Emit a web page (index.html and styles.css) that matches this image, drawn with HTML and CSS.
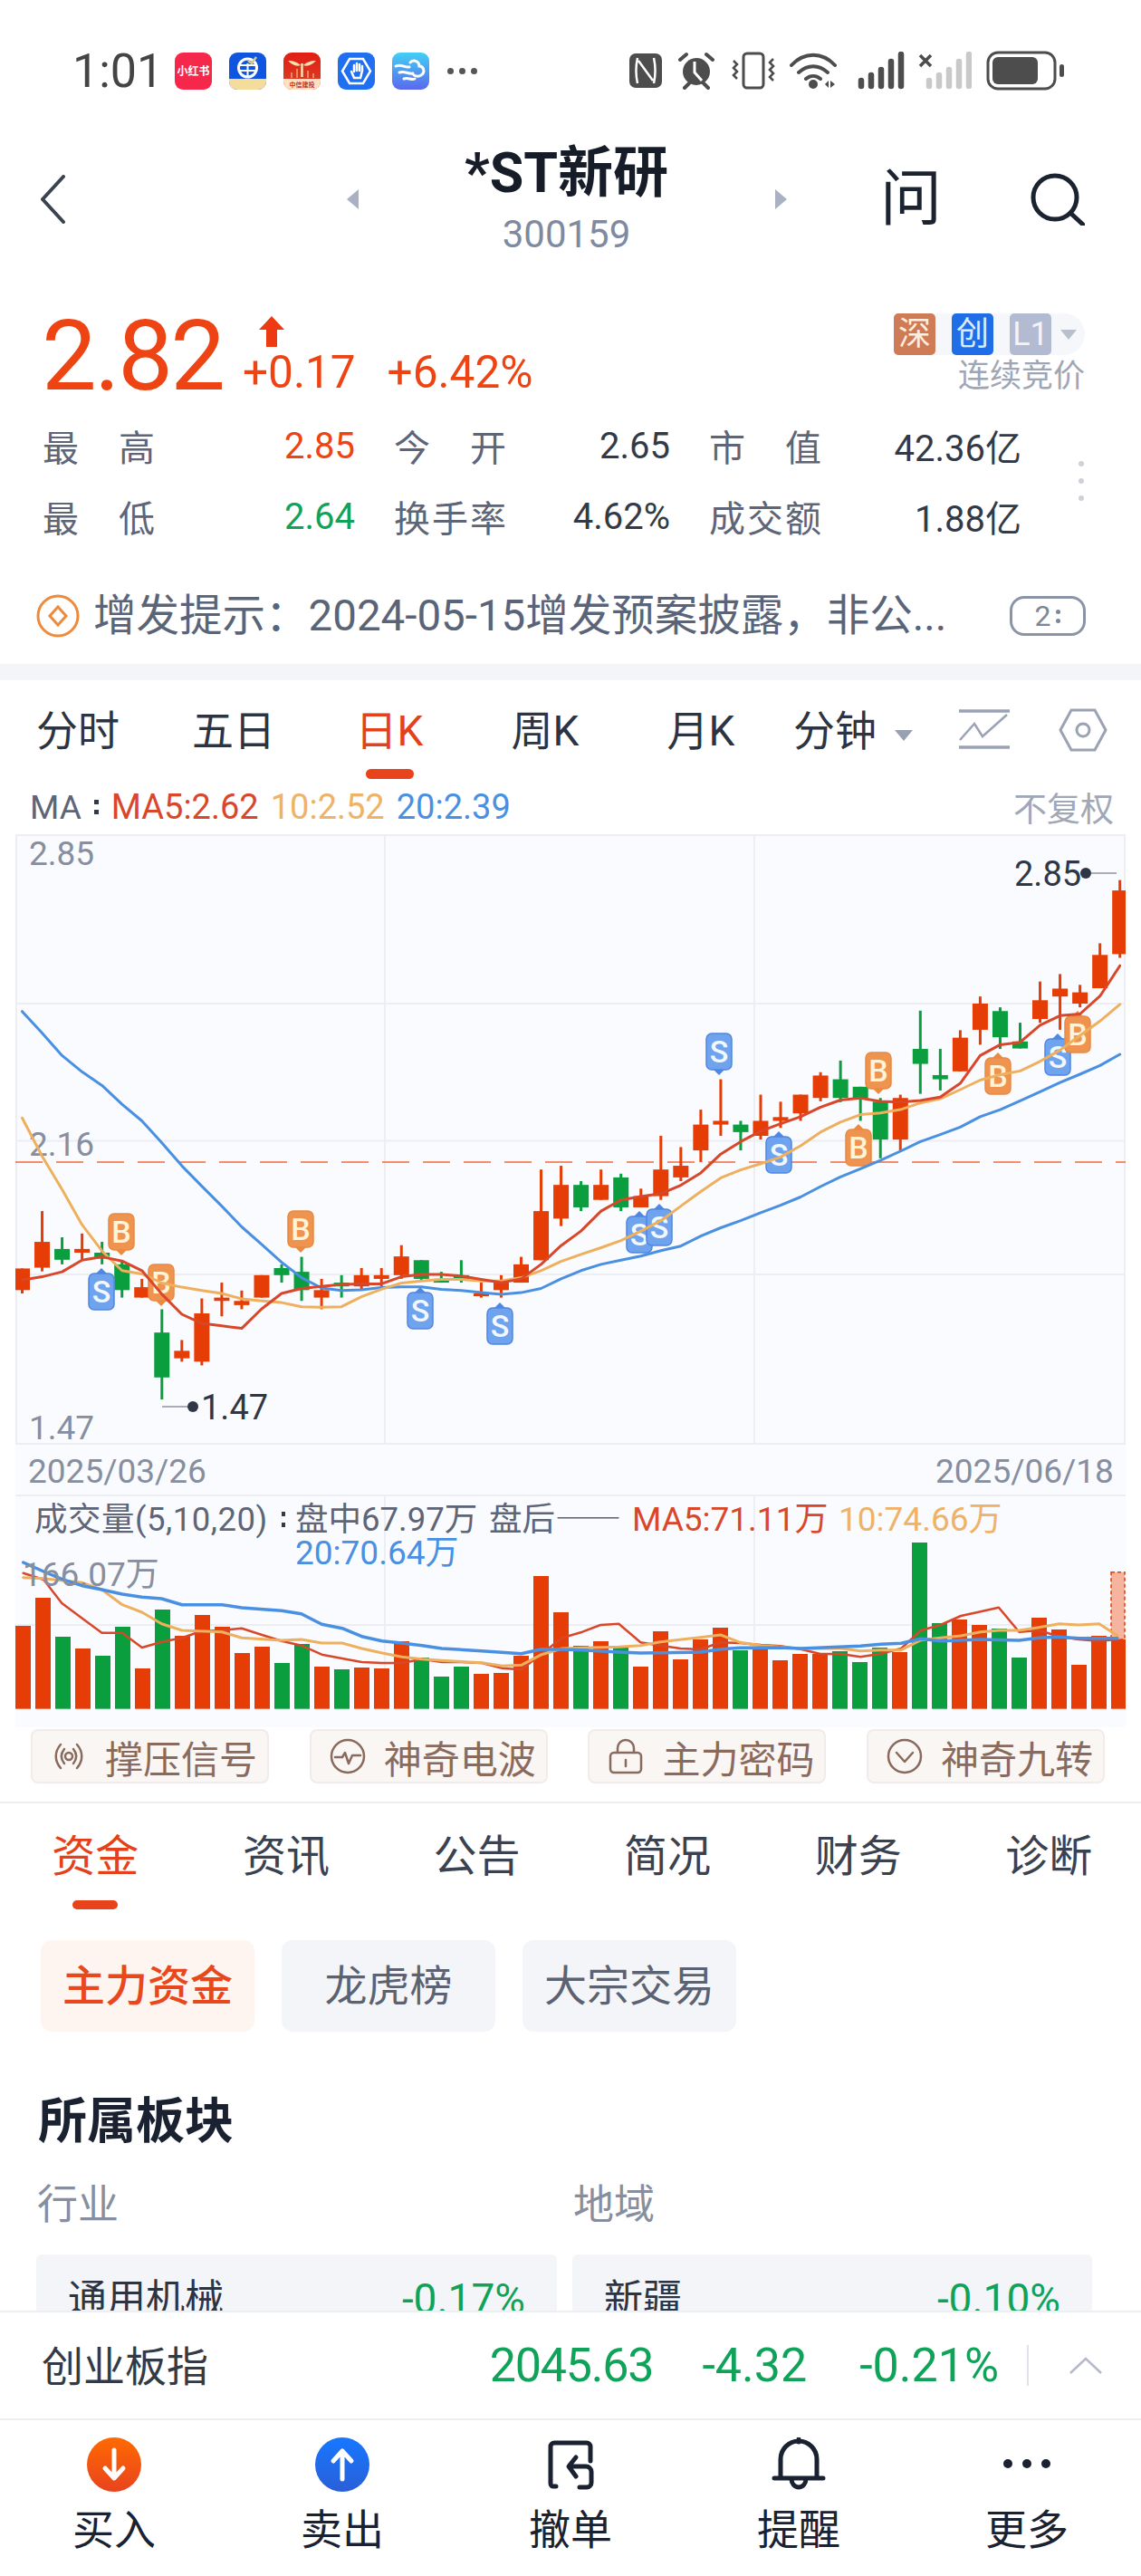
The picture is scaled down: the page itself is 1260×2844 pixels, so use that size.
FILE: index.html
```html
<!DOCTYPE html>
<html lang="zh-CN">

<head>
  <meta charset="UTF-8">
  <meta name="viewport" content="width=device-width, initial-scale=1.0">
  <title>*ST新研 300159</title>
  <link rel="stylesheet" href="styles.css">
</head>

<body>
  <main class="page-main">
    <div class="status">
      <span class="status-time">1:01</span>
      <div class="status-apps">
        <svg class="app-icon" viewBox="0 0 41 41"><rect width="41" height="41" rx="9" fill="#f5274a"/><text x="20.5" y="25" class="app-text">小红书</text></svg>
        <svg class="app-icon" viewBox="0 0 41 41"><rect width="41" height="41" rx="9" fill="#0f55e0"/><path d="M0 29h41v3a9 9 0 0 1-9 9H9a9 9 0 0 1-9-9z" fill="#f4dc9c"/><circle cx="20.5" cy="17" r="10" fill="none" stroke="#fff" stroke-width="3"/><path d="M11 14h19M11 20h19M20.500 12v14" stroke="#fff" stroke-width="2"/><path d="M21 9l4 3 5-7" fill="none" stroke="#d8c98a" stroke-width="2.500"/></svg>
        <svg class="app-icon" viewBox="0 0 41 41"><defs><linearGradient id="citicBg" x1="0" y1="0" x2="0" y2="1"><stop offset="0" stop-color="#e21d12"/><stop offset="1" stop-color="#d8432a"/></linearGradient></defs><rect width="41" height="41" rx="9" fill="url(#citicBg)"/><path d="M0 29h41v3a9 9 0 0 1-9 9H9a9 9 0 0 1-9-9z" fill="#fbe2c4"/><path d="M5 9c6 0 11 2 14 5-5 2-10-1-14-5zM36 9c-6 0-11 2-14 5 5 2 10-1 14-5z" fill="#fbe0b0"/><path d="M20.500 12v15" stroke="#fbe0b0" stroke-width="2.500"/><path d="M9 22v6M15 18v10M27 20v8M33 23v5" stroke="#f08a5c" stroke-width="2"/><text x="20.500" y="38" class="app-text-tiny">中信建投</text></svg>
        <svg class="app-icon" viewBox="0 0 41 41"><rect width="41" height="41" rx="9" fill="#1f6ff0"/><path d="M13 7h15l8 13.500-8 13.500H13L5 20.500z" fill="none" stroke="#fff" stroke-width="2.500"/><path d="M15 21l3 7h7l2-8v-5M18 21v-7M21 20v-8M24 20v-7" fill="none" stroke="#fff" stroke-width="2.500" stroke-linecap="round"/></svg>
        <svg class="app-icon" viewBox="0 0 41 41"><defs><linearGradient id="cloudBg" x1="0" y1="0" x2="0" y2="1"><stop offset="0" stop-color="#42d0f5"/><stop offset="1" stop-color="#5b68ee"/></linearGradient></defs><rect width="41" height="41" rx="9" fill="url(#cloudBg)"/><path d="M4 15c6-3 10 2 15 1M8 22c6-2 9 2 15 1M20 11c4-4 10-1 10 4 5 0 7 7 2 10-3 2-6 1-8 0M13 29c5-2 8 2 12 0" fill="none" stroke="#fff" stroke-width="3" stroke-linecap="round"/></svg>
      </div>
      <span class="status-more"><i></i><i></i><i></i></span>
      <div class="status-right">
        <svg class="st-nfc" viewBox="0 0 36 38"><rect width="36" height="38" rx="7" fill="#4d4d4d"/><path d="M9 5c-2 9-2 19 0 28M27 5c2 9 2 19 0 28M10 8l16 22" fill="none" stroke="#fff" stroke-width="2.500"/></svg>
        <svg class="st-alarm" viewBox="0 0 40 42"><circle cx="20" cy="22" r="15" fill="#4d4d4d"/><path d="M18 11v12l8 9" fill="none" stroke="#fff" stroke-width="3"/><path d="M2 9l7-6M38 9l-7-6M7 40l5-5M33 40l-5-5" stroke="#4d4d4d" stroke-width="4" stroke-linecap="round"/></svg>
        <svg class="st-vibrate" viewBox="0 0 48 42"><rect x="13" y="2" width="22" height="38" rx="4" fill="none" stroke="#4d4d4d" stroke-width="3"/><path d="M2 10l4 4-4 4 4 4-4 4 4 4M46 8l-4 4 4 4-4 4 4 4-4 4 4 4" fill="none" stroke="#4d4d4d" stroke-width="2.500"/></svg>
        <svg class="st-wifi" viewBox="0 0 52 42"><path d="M2 15c14-15 34-15 48 0M10 23c10-9 22-9 32 0M18 30c5-4 11-4 16 0" fill="none" stroke="#4d4d4d" stroke-width="4" stroke-linecap="round"/><circle cx="26" cy="36" r="5" fill="#4d4d4d"/><path d="M39 36l4-4v8zM45 32l5 4-5 4z" fill="#4d4d4d"/></svg>
        <svg class="st-signal" viewBox="0 0 52 42"><path d="M4 38v-6M15 38V26M26 38V20M37 38V11M48 38V3" stroke="#4d4d4d" stroke-width="6.500" stroke-linecap="round"/></svg>
        <svg class="st-signal2" viewBox="0 0 59 42"><path d="M2 4l12 12M14 4L2 16" stroke="#4d4d4d" stroke-width="3.500"/><path d="M12 38v-6M23 38V26M34 38V20M45 38V11M56 38V3" stroke="#c9c9c9" stroke-width="6.500" stroke-linecap="round"/></svg>
        <svg class="st-battery" viewBox="0 0 86 44"><rect x="2" y="2" width="74" height="40" rx="11" fill="none" stroke="#4d4d4d" stroke-width="3"/><rect x="7" y="7" width="50" height="30" rx="6" fill="#4d4d4d"/><rect x="81" y="15" width="5" height="14" rx="2.500" fill="#4d4d4d"/></svg>
      </div>
    </div>

    <header class="nav">
      <svg class="nav-back" viewBox="0 0 28 54"><path d="M26 2L3 27l23 25" fill="none" stroke="#3b4250" stroke-width="4" stroke-linecap="round" stroke-linejoin="round"/></svg>
      <div class="nav-center">
        <span class="nav-tri nav-tri-left"></span>
        <div class="nav-title">
          <div class="nav-name">*ST新研</div>
          <div class="nav-code">300159</div>
        </div>
        <span class="nav-tri nav-tri-right"></span>
      </div>
      <div class="nav-right">
        <span class="nav-ask">问</span>
        <svg class="nav-search" viewBox="0 0 62 58"><circle cx="29" cy="27" r="24" fill="none" stroke="#1c2330" stroke-width="5"/><path d="M46 44l14 13" stroke="#1c2330" stroke-width="5" stroke-linecap="round"/></svg>
      </div>
    </header>

    <section class="quote">
      <div class="price-row">
        <div class="price">2.82</div>
        <div class="change-col">
          <svg class="change-arrow" viewBox="0 0 30 34"><path d="M15 0l14 15h-8v19H9V15H1z" fill="#ee3a12"/></svg>
          <div class="change-vals"><span>+0.17</span><span>+6.42%</span></div>
        </div>
        <div class="tag-col">
          <div class="tag-pill">
            <span class="tag tag-sz">深</span>
            <span class="tag tag-cy">创</span>
            <span class="tag tag-l1">L1</span>
            <span class="tag-tri"></span>
          </div>
          <div class="tag-note">连续竞价</div>
        </div>
      </div>
      <div class="stats-wrap">
        <div class="stats">
          <div class="stat"><span class="stat-label">最高</span><span class="up">2.85</span></div>
          <div class="stat"><span class="stat-label">今开</span><span>2.65</span></div>
          <div class="stat"><span class="stat-label">市值</span><span>42.36亿</span></div>
          <div class="stat"><span class="stat-label">最低</span><span class="down">2.64</span></div>
          <div class="stat"><span class="stat-label">换手率</span><span>4.62%</span></div>
          <div class="stat"><span class="stat-label">成交额</span><span>1.88亿</span></div>
        </div>
        <span class="stats-more"><i></i><i></i><i></i></span>
      </div>
    </section>

    <div class="notice">
      <svg class="notice-icon" viewBox="0 0 48 48"><circle cx="24" cy="24" r="22" fill="none" stroke="#ee8a3c" stroke-width="3"/><path d="M24 14l9 10-9 10-9-10z" fill="none" stroke="#ee8a3c" stroke-width="3"/></svg>
      <span class="notice-text">增发提示：2024-05-15增发预案披露，非公...</span>
      <span class="notice-pill">2<span class="pill-dots"><i></i><i></i></span></span>
    </div>

    <div class="band"></div>

    <nav class="ktabs">
      <div class="ktab">分时</div>
      <div class="ktab">五日</div>
      <div class="ktab ktab-active">日K</div>
      <div class="ktab">周K</div>
      <div class="ktab">月K</div>
      <div class="ktab ktab-min">分钟<span class="ktab-tri"></span></div>
      <svg class="ktab-line" viewBox="0 0 58 44"><path d="M1 2h56M1 42h56" stroke="#9aa2b4" stroke-width="3.500"/><path d="M2 34l16-18 9 14L54 6" fill="none" stroke="#9aa2b4" stroke-width="2.500"/></svg>
      <svg class="ktab-hex" viewBox="0 0 54 48"><path d="M14 2h26l12 22-12 22H14L2 24z" fill="none" stroke="#9aa2b4" stroke-width="3"/><circle cx="27" cy="24" r="7" fill="none" stroke="#9aa2b4" stroke-width="3"/></svg>
    </nav>

    <div class="ma-row">
      <span class="ma-name">MA</span><span class="ma-dots"><i></i><i></i></span>
      <span class="ma5">MA5:2.62</span>
      <span class="ma10">10:2.52</span>
      <span class="ma20">20:2.39</span>
      <span class="ma-adjust">不复权</span>
    </div>

    <div class="chart-panel">
      <svg class="chart-svg" viewBox="17 921 1226 986" width="1226" height="986">
        <g class="grid-lines">
          <path d="M17 922H1243M17 1108H1243M17 1259.500H1243M17 1407H1243M17 1594H1243M425 922V1594M833 922V1594M18 922V1594M1242 922V1594"/>
          <path d="M17 1651H1243M17 1794H1243M425 1651V1887M833 1651V1887"/>
        </g>
        <text x="32" y="955" class="axis-text">2.85</text>
        <text x="32" y="1276" class="axis-text">2.16</text>
        <text x="32" y="1589" class="axis-text">1.47</text>
        <path class="prev-close" d="M17 1283H1243"/>
        <g id="candles"></g>
        <g id="markers"></g>
        <g id="maLines"></g>
        <path class="peak-line" d="M179 1553H208M1205 964H1233"/>
        <circle cx="213" cy="1553" r="6" class="peak-dot"/>
        <circle cx="1199" cy="964" r="6" class="peak-dot"/>
        <text x="222" y="1567" class="peak-text">1.47</text>
        <text x="1120" y="978" class="peak-text">2.85</text>
        <text x="31" y="1637" class="date-text">2025/03/26</text>
        <text x="1033" y="1637" class="date-text">2025/06/18</text>
        <g id="volBars"></g>
        <g id="volLines"></g>
        <text x="25" y="1751" class="vol-text vol-gray">166.07万</text>
        <text x="38" y="1690" class="vol-text vol-dark vol-head">成交量(5,10,20)</text>
        <rect x="311" y="1669" width="4" height="5" class="vol-dot"/>
        <rect x="311" y="1681" width="4" height="5" class="vol-dot"/>
        <text x="326" y="1690" class="vol-text vol-dark">盘中67.97万</text>
        <text x="540" y="1690" class="vol-text vol-dark vol-cjk">盘后——</text>
        <text x="698" y="1690" class="vol-text vol-red">MA5:71.11万</text>
        <text x="926" y="1690" class="vol-text vol-orange">10:74.66万</text>
        <text x="326" y="1727" class="vol-text vol-blue">20:70.64万</text>
      </svg>
    </div>

    <div class="signals">
      <div class="signal">
        <svg viewBox="0 0 40 40"><circle cx="20" cy="20" r="4" fill="none"/><path d="M11 7c-7 8-7 18 0 26M29 7c7 8 7 18 0 26M15 12c-4 5-4 11 0 16M25 12c4 5 4 11 0 16"/></svg>
        撑压信号
      </div>
      <div class="signal">
        <svg viewBox="0 0 40 40"><circle cx="20" cy="20" r="18"/><path d="M6 21h8l3-5 4 12 4-9h9"/></svg>
        神奇电波
      </div>
      <div class="signal">
        <svg viewBox="0 0 40 40"><rect x="3" y="16" width="34" height="22" rx="4"/><path d="M11 16v-5a9 9 0 0 1 18 0v5M20 24v7"/></svg>
        主力密码
      </div>
      <div class="signal">
        <svg viewBox="0 0 40 40"><circle cx="20" cy="20" r="18"/><path d="M11 16l9 10 9-10"/></svg>
        神奇九转
      </div>
    </div>

    <nav class="dtabs">
      <div class="dtab dtab-active">资金</div>
      <div class="dtab">资讯</div>
      <div class="dtab">公告</div>
      <div class="dtab">简况</div>
      <div class="dtab">财务</div>
      <div class="dtab">诊断</div>
    </nav>

    <div class="chips">
      <div class="chip chip-active">主力资金</div>
      <div class="chip">龙虎榜</div>
      <div class="chip">大宗交易</div>
    </div>

    <h2 class="block-title">所属板块</h2>
    <div class="block-grid">
      <div class="block-col">
        <div class="block-label">行业</div>
        <div class="block-card"><span>通用机械</span><span class="block-pct">-0.17%</span></div>
      </div>
      <div class="block-col">
        <div class="block-label">地域</div>
        <div class="block-card"><span>新疆</span><span class="block-pct">-0.10%</span></div>
      </div>
    </div>
  </main>

  <div class="index-bar">
    <span class="index-name">创业板指</span>
    <div class="index-nums"><span class="index-last">2045.63</span><span class="index-diff">-4.32</span><span>-0.21%</span></div>
    <span class="index-sep"></span>
    <svg class="index-chevron" viewBox="0 0 38 20"><path d="M2 18L19 2l17 16" fill="none" stroke="#b4bac8" stroke-width="2.500"/></svg>
  </div>

  <nav class="bottom-nav">
    <div class="bnav-item">
      <svg class="bnav-icon" viewBox="0 0 60 60"><defs><linearGradient id="buyBg" x1="0" y1="0" x2="0" y2="1"><stop offset="0" stop-color="#ff6a00"/><stop offset="1" stop-color="#e8431f"/></linearGradient></defs><circle cx="30" cy="30" r="30" fill="url(#buyBg)"/><path d="M30 14v31M20 34l10 11 10-11" fill="none" stroke="#fff" stroke-width="5" stroke-linecap="round" stroke-linejoin="round"/></svg>
      买入
    </div>
    <div class="bnav-item">
      <svg class="bnav-icon" viewBox="0 0 60 60"><defs><linearGradient id="sellBg" x1="0" y1="0" x2="0" y2="1"><stop offset="0" stop-color="#1677ff"/><stop offset="1" stop-color="#2a5fd8"/></linearGradient></defs><circle cx="30" cy="30" r="30" fill="url(#sellBg)"/><path d="M30 46V15M20 26l10-11 10 11" fill="none" stroke="#fff" stroke-width="5" stroke-linecap="round" stroke-linejoin="round"/></svg>
      卖出
    </div>
    <div class="bnav-item">
      <svg class="bnav-icon" viewBox="0 0 60 60"><path d="M14 54h-3a3 3 0 0 1-3-3V10a4 4 0 0 1 4-4h36a4 4 0 0 1 4 4v16M40 55h8a5 5 0 0 0 5-5V38a6 6 0 0 0-6-6H29M36 22l-8 10 8 11" fill="none" stroke="#1a2130" stroke-width="5" stroke-linecap="round" stroke-linejoin="round"/></svg>
      撤单
    </div>
    <div class="bnav-item">
      <svg class="bnav-icon" viewBox="0 0 60 60"><path d="M10 44V24a20 20 0 0 1 40 0v20M3 45h54M30 2v3M22 46a8 9 0 0 0 16 0" fill="none" stroke="#1a2130" stroke-width="5" stroke-linecap="round"/></svg>
      提醒
    </div>
    <div class="bnav-item">
      <svg class="bnav-icon" viewBox="0 0 60 60"><circle cx="9" cy="29" r="5" fill="#1a2130"/><circle cx="30" cy="29" r="5" fill="#1a2130"/><circle cx="51" cy="29" r="5" fill="#1a2130"/></svg>
      更多
    </div>
  </nav>

  <script src="chart.js"></script>
</body>

</html>
```

FILE: styles.css
```css
*,
*::before,
*::after {
  margin: 0;
  padding: 0;
  box-sizing: border-box;
}
body {
  width: 1260px;
  height: 2844px;
  display: flex;
  flex-direction: column;
  overflow: hidden;
  background: #fff;
  font-family: Roboto, "Noto Sans CJK SC", sans-serif;
  color: #333a47;
}
i {
  display: block;
}
.up {
  color: #ee4312;
}
.down {
  color: #0fa35a;
}
.page-main {
  flex: 1;
  min-height: 0;
  overflow: hidden;
}

/* status bar */
.status {
  display: flex;
  align-items: center;
  height: 156px;
  padding: 0 85px 0 80px;
}
.status-time {
  width: 113px;
  font-size: 52px;
  color: #444;
}
.status-apps {
  display: flex;
  gap: 19px;
}
.app-icon {
  width: 41px;
  height: 41px;
}
.app-text {
  font-size: 12px;
  font-weight: 700;
  fill: #fff;
  text-anchor: middle;
}
.app-text-tiny {
  font-size: 7px;
  font-weight: 700;
  fill: #c8321c;
  text-anchor: middle;
}
.status-more {
  display: flex;
  gap: 6px;
  margin-left: 20px;
}
.status-more i {
  width: 7px;
  height: 7px;
  border-radius: 50%;
  background: #555;
}
.status-right {
  display: flex;
  align-items: center;
  margin-left: auto;
}
.st-nfc {
  width: 36px;
  height: 38px;
}
.st-alarm {
  width: 40px;
  height: 42px;
  margin-left: 18px;
}
.st-vibrate {
  width: 48px;
  height: 42px;
  margin-left: 19px;
}
.st-wifi {
  width: 52px;
  height: 42px;
  margin-left: 16px;
}
.st-signal {
  width: 52px;
  height: 42px;
  margin-left: 23px;
}
.st-signal2 {
  width: 59px;
  height: 42px;
  margin-left: 15px;
}
.st-battery {
  width: 86px;
  height: 44px;
  margin-left: 16px;
}

/* nav */
.nav {
  display: grid;
  grid-template-columns: 1fr auto 1fr;
  align-items: center;
  height: 126px;
  padding: 0 62px 0 44px;
}
.nav-back {
  width: 28px;
  height: 54px;
}
.nav-center {
  display: flex;
  align-items: center;
  justify-content: space-between;
  width: 486px;
  margin-left: 9px;
}
.nav-tri {
  width: 0;
  height: 0;
  border-top: 11px solid transparent;
  border-bottom: 11px solid transparent;
}
.nav-tri-left {
  border-right: 13px solid #a9b1c3;
}
.nav-tri-right {
  border-left: 13px solid #a9b1c3;
}
.nav-title {
  padding-top: 4px;
  text-align: center;
}
.nav-name {
  font-size: 61px;
  line-height: 62px;
  font-weight: 700;
  color: #161c28;
}
.nav-code {
  margin-top: 13px;
  font-size: 42px;
  line-height: 48px;
  color: #7f8aa0;
}
.nav-right {
  display: flex;
  align-items: center;
  justify-content: flex-end;
  gap: 96px;
}
.nav-ask {
  font-size: 68px;
  line-height: 68px;
  color: #1c2330;
}
.nav-search {
  width: 62px;
  height: 58px;
}

/* quote */
.quote {
  padding: 57px 62px 0 46px;
}
.price-row {
  display: flex;
  align-items: flex-start;
}
.price {
  width: 198px;
  font-size: 108px;
  line-height: 108px;
  letter-spacing: -2.500px;
  color: #ee4312;
}
.change-col {
  margin: 10px 0 0 24px;
}
.change-arrow {
  display: block;
  width: 30px;
  height: 34px;
  margin-left: 17px;
}
.change-vals {
  display: flex;
  gap: 35px;
  margin-top: 2px;
  font-size: 49.5px;
  line-height: 52px;
  color: #ee4312;
}
.tag-col {
  margin: 7px 0 0 auto;
}
.tag-pill {
  display: flex;
  align-items: center;
  gap: 18px;
  width: 211px;
  height: 46px;
  border-radius: 23px 23px 23px 8px;
  background: #f6f7fb;
}
.tag {
  width: 46px;
  height: 46px;
  border-radius: 5px;
  font-size: 36px;
  line-height: 46px;
  text-align: center;
  color: #fff;
}
.tag-sz {
  background: #cf7b55;
  color: #ffeedd;
}
.tag-cy {
  background: #1f6ee8;
  color: #d8ecff;
}
.tag-l1 {
  background: #b3bbd3;
  color: #f2f4fa;
}
.tag-tri {
  width: 0;
  height: 0;
  margin-left: -8px;
  border-left: 9px solid transparent;
  border-right: 9px solid transparent;
  border-top: 11px solid #b9bfcc;
}
.tag-note {
  margin-top: 2px;
  padding-left: 71px;
  font-size: 35px;
  line-height: 44px;
  white-space: nowrap;
  color: #9ea6b6;
}
.stats-wrap {
  display: flex;
  align-items: center;
  margin: 6px 0 0 1px;
}
.stats {
  display: grid;
  grid-template-columns: 345px 305px 345px;
  column-gap: 43px;
  grid-auto-rows: 78px;
  flex-shrink: 0;
  font-size: 40px;
}
.stat {
  display: flex;
  align-items: center;
  justify-content: space-between;
  white-space: nowrap;
}
.stat-label {
  width: 124px;
  text-align-last: justify;
  color: #5d6576;
}
.stats-more {
  display: flex;
  flex-direction: column;
  gap: 13px;
  margin-left: 63px;
}
.stats-more i {
  width: 6px;
  height: 6px;
  border-radius: 50%;
  background: #cdd1da;
}

/* notice */
.notice {
  display: flex;
  align-items: center;
  padding: 47px 61px 29px 40px;
}
.notice-icon {
  width: 48px;
  height: 48px;
  flex-shrink: 0;
}
.notice-text {
  margin-left: 15px;
  font-size: 47.5px;
  line-height: 48px;
  white-space: nowrap;
  color: #5a6478;
}
.notice-pill {
  display: flex;
  align-items: center;
  justify-content: center;
  gap: 6px;
  width: 84px;
  height: 44px;
  margin-left: auto;
  border: 3px solid #8b93a6;
  border-radius: 16px;
  font-size: 32px;
  line-height: 38px;
  color: #7d8699;
}
.pill-dots i {
  width: 5px;
  height: 5px;
  margin: 5px 0;
  border-radius: 50%;
  background: #7d8699;
}
.band {
  height: 18px;
  background: #f4f5f9;
}

/* kline tabs */
.ktabs {
  display: flex;
  height: 110px;
}
.ktab {
  width: 172px;
  padding-top: 31px;
  font-size: 46px;
  line-height: 50px;
  text-align: center;
  color: #2c3342;
}
.ktab-active {
  color: #e4411a;
}
.ktab-active::after {
  content: "";
  display: block;
  width: 53px;
  height: 11px;
  margin: 17px auto 0;
  border-radius: 6px;
  background: #e8431a;
}
.ktab-min {
  display: flex;
  align-items: flex-start;
  width: auto;
  margin-left: 16px;
}
.ktab-tri {
  width: 0;
  height: 0;
  margin: 24px 0 0 20px;
  border-left: 10px solid transparent;
  border-right: 10px solid transparent;
  border-top: 12px solid #98a0b2;
}
.ktab-line {
  width: 58px;
  height: 44px;
  margin: 32px 0 0 50px;
}
.ktab-hex {
  width: 54px;
  height: 48px;
  margin: 31px 0 0 53px;
}

/* ma legend */
.ma-row {
  display: flex;
  align-items: center;
  height: 60px;
  padding: 0 30px 0 33px;
  font-size: 38px;
  white-space: nowrap;
}
.ma-name {
  font-size: 37px;
  color: #5d6576;
}
.ma-dots {
  margin: 0 14px 0 14px;
}
.ma-dots i {
  width: 5px;
  height: 5px;
  margin: 6px 0;
  background: #333a47;
}
.ma5 {
  color: #d9472b;
}
.ma10 {
  margin-left: 13px;
  color: #eeb268;
}
.ma20 {
  margin-left: 13px;
  color: #4a90e2;
}
.ma-adjust {
  margin-left: auto;
  font-size: 37px;
  color: #a0a7b6;
}

/* chart */
.chart-panel {
  width: 1226px;
  height: 986px;
  margin-left: 17px;
  background: #fafbfe;
}
.chart-svg {
  display: block;
}
.grid-lines path {
  fill: none;
  stroke: #eceef3;
  stroke-width: 2;
}
.axis-text {
  font-size: 37px;
  fill: #868ea0;
}
.date-text {
  font-size: 37px;
  fill: #868ea0;
}
.prev-close {
  fill: none;
  stroke: #ef6b3a;
  stroke-width: 1.500;
  stroke-dasharray: 30 15;
}
.peak-line {
  fill: none;
  stroke: #8d94a3;
  stroke-width: 1.500;
}
.peak-dot {
  fill: #2f3747;
}
.peak-text {
  font-size: 38px;
  fill: #2f3747;
}
.vol-text {
  font-size: 37px;
}
.vol-head {
  font-size: 36.500px;
  letter-spacing: 0.500px;
}
.vol-cjk {
  font-family: "Noto Sans CJK SC", sans-serif;
  font-size: 36.500px;
}
.vol-gray {
  fill: #868ea0;
}
.vol-dark {
  font-size: 36.500px;
  fill: #5d6576;
}
.vol-red {
  fill: #d9472b;
}
.vol-orange {
  fill: #eeb268;
}
.vol-blue {
  fill: #4a90e2;
}
.vol-dot {
  fill: #333a47;
}
.marker-letter {
  font-size: 34px;
  font-weight: 500;
  text-anchor: middle;
}

/* signal buttons */
.signals {
  display: grid;
  grid-template-columns: repeat(4, 263px);
  column-gap: 44.700px;
  padding: 2px 0 20px 34px;
  border-bottom: 2px solid #eceef2;
}
.signal {
  display: flex;
  align-items: center;
  gap: 20px;
  height: 60px;
  padding-left: 20px;
  border: 2px solid #f1ece9;
  border-radius: 8px;
  background: #f9f6f4;
  font-size: 42px;
  color: #8a6a5c;
  white-space: nowrap;
}
.signal svg {
  width: 40px;
  height: 40px;
  fill: none;
  stroke: #8a6a5c;
  stroke-width: 2.500;
  stroke-linecap: round;
  stroke-linejoin: round;
}

/* detail tabs */
.dtabs {
  display: grid;
  grid-template-columns: repeat(6, 210.6px);
  height: 117px;
}
.dtab {
  padding-top: 31px;
  font-size: 48px;
  line-height: 56px;
  text-align: center;
  color: #3a4150;
}
.dtab-active {
  color: #e4411a;
}
.dtab-active::after {
  content: "";
  display: block;
  width: 50px;
  height: 10px;
  margin: 20px auto 0;
  border-radius: 5px;
  background: #e8431a;
}
.chips {
  display: flex;
  gap: 30px;
  margin-top: 34px;
  padding-left: 45px;
}
.chip {
  width: 236px;
  height: 101px;
  border-radius: 12px;
  background: #f4f5f9;
  font-size: 47px;
  line-height: 101px;
  text-align: center;
  color: #5b6373;
}
.chip-active {
  background: #fff5f0;
  font-weight: 500;
  color: #e8481c;
}
.block-title {
  margin-top: 65px;
  padding-left: 42px;
  font-size: 54px;
  line-height: 70px;
  font-weight: 700;
  color: #1a2130;
}
.block-grid {
  display: grid;
  grid-template-columns: 575px 574px;
  column-gap: 17px;
  margin-top: 27px;
  padding-left: 40px;
}
.block-label {
  padding-left: 1px;
  font-size: 45px;
  line-height: 60px;
  color: #868ea0;
}
.block-card {
  display: flex;
  justify-content: space-between;
  height: 100px;
  margin-top: 24px;
  padding: 27px 35px 0 35px;
  border-radius: 6px;
  background: #f4f5f9;
  font-size: 43px;
  line-height: 44px;
  color: #2c3342;
}
.block-pct {
  font-size: 46px;
  color: #0fa35a;
}

/* bottom */
.index-bar {
  display: flex;
  align-items: center;
  flex-shrink: 0;
  height: 121px;
  padding: 0 42px 0 46px;
  border-top: 2px solid #eceef2;
  border-bottom: 2px solid #eceef2;
}
.index-name {
  margin-top: -6px;
  font-size: 46px;
  color: #333a47;
}
.index-nums {
  display: flex;
  gap: 54px;
  margin-left: auto;
  font-size: 52px;
  color: #0fa35a;
}
.index-last {
  letter-spacing: -1.200px;
}
.index-diff {
  margin-right: 4px;
}
.index-sep {
  width: 2px;
  height: 45px;
  margin-left: 31px;
  background: #dfe2e8;
}
.index-chevron {
  width: 38px;
  height: 20px;
  margin-left: 44px;
}
.bottom-nav {
  display: grid;
  grid-template-columns: repeat(5, 252px);
  flex-shrink: 0;
  height: 172px;
}
.bnav-item {
  display: flex;
  flex-direction: column;
  align-items: center;
  padding-top: 19px;
  font-size: 46px;
  line-height: 56px;
  color: #1a2130;
}
.bnav-icon {
  width: 60px;
  height: 60px;
  margin-bottom: 14px;
}
```

FILE: chart.js
```js
const RED = '#e63c05'
const GREEN = '#0a9e3f'
const ORANGE = '#eeb05e'
const BLUE = '#4a90e2'
const MA_RED = '#d9472b'

// y positions in chart units, converted by priceY
const priceY = v => 900 + v / 2.178
const volY = v => 1620 + v / 3
const candleX = i => 24.5 + 22.04 * i

// [up, high, top, bottom, low]
const candles = [
  [1, 1090, 1090, 1142, 1150], [1, 952, 1026, 1088, 1097], [0, 1015, 1043, 1069, 1080],
  [1, 1006, 1043, 1052, 1070], [0, 1026, 1052, 1066, 1080], [0, 1070, 1080, 1142, 1160],
  [1, 1115, 1135, 1160, 1160], [0, 1188, 1244, 1352, 1405], [1, 1262, 1288, 1306, 1314],
  [1, 1162, 1198, 1314, 1323], [1, 1124, 1160, 1168, 1205], [1, 1143, 1168, 1178, 1188],
  [1, 1106, 1106, 1160, 1160], [0, 1080, 1089, 1106, 1124], [0, 1062, 1098, 1142, 1168],
  [1, 1115, 1142, 1160, 1188], [0, 1106, 1124, 1133, 1160], [1, 1089, 1106, 1133, 1140],
  [1, 1089, 1106, 1115, 1133], [1, 1034, 1061, 1106, 1115], [0, 1070, 1070, 1115, 1118],
  [0, 1098, 1115, 1124, 1124], [0, 1070, 1106, 1115, 1124], [1, 1124, 1150, 1153, 1160],
  [1, 1106, 1124, 1142, 1160], [1, 1062, 1080, 1124, 1124], [1, 852, 952, 1070, 1070],
  [1, 843, 889, 970, 988], [0, 880, 889, 943, 952], [1, 852, 889, 925, 925],
  [0, 862, 871, 943, 952], [1, 898, 916, 943, 943], [1, 771, 852, 916, 925],
  [1, 798, 843, 871, 880], [1, 708, 744, 806, 834], [1, 635, 735, 744, 771],
  [0, 735, 744, 762, 806], [1, 672, 735, 771, 780], [1, 689, 726, 735, 752],
  [1, 672, 672, 717, 735], [1, 618, 626, 680, 688], [0, 590, 635, 680, 690],
  [0, 653, 653, 680, 735], [0, 680, 689, 780, 825], [1, 672, 680, 780, 806],
  [0, 470, 562, 598, 670], [0, 562, 625, 635, 662], [1, 517, 535, 616, 616],
  [1, 436, 453, 516, 552], [0, 462, 471, 534, 562], [0, 499, 544, 561, 561],
  [1, 400, 445, 490, 499], [1, 382, 417, 436, 516], [1, 408, 426, 453, 462],
  [1, 308, 336, 416, 416], [1, 156, 181, 334, 343]
]

const maRed = [1118, 1110, 1098, 1070, 1062, 1072, 1095, 1152, 1200, 1222, 1228, 1234, 1187, 1150, 1138, 1133, 1128, 1127, 1127, 1110, 1104, 1104, 1108, 1116, 1124, 1115, 1080, 1035, 1000, 952, 925, 917, 910, 890, 860, 815, 785, 760, 742, 725, 702, 685, 680, 688, 690, 686, 678, 645, 578, 552, 546, 505, 482, 478, 435, 362]
const maOrange = [728, 820, 900, 985, 1048, 1095, 1103, 1125, 1135, 1143, 1150, 1163, 1168, 1172, 1182, 1183, 1182, 1158, 1140, 1125, 1120, 1116, 1116, 1120, 1120, 1112, 1095, 1073, 1056, 1040, 1023, 1000, 975, 940, 905, 872, 853, 838, 822, 795, 762, 738, 720, 716, 708, 692, 682, 660, 637, 624, 615, 592, 565, 530, 495, 455]
const maBlue = [472, 524, 578, 617, 650, 695, 735, 788, 843, 892, 940, 990, 1032, 1075, 1112, 1137, 1143, 1141, 1136, 1134, 1134, 1140, 1143, 1148, 1152, 1148, 1138, 1115, 1095, 1080, 1070, 1060, 1047, 1036, 1012, 992, 975, 956, 938, 918, 893, 870, 850, 830, 808, 785, 768, 750, 725, 708, 687, 665, 643, 623, 602, 575]

// [center x, top y, letter, tip goes up]
const markers = [
  [112, 1400, 'S', 1], [134, 1340, 'B', 0], [178, 1396, 'B', 0], [332, 1337, 'B', 0],
  [464, 1421, 'S', 1], [552, 1438, 'S', 1], [706, 1337, 'S', 1], [728, 1329, 'S', 1],
  [794, 1141, 'S', 0], [860, 1249, 'S', 1], [948, 1241, 'B', 1], [970, 1162, 'B', 0],
  [1102, 1162, 'B', 1], [1168, 1141, 'S', 1], [1190, 1116, 'B', 1]
]

const volumes = [
  [1, 525], [1, 432], [0, 561], [1, 600], [0, 624], [0, 528], [1, 666], [0, 471],
  [1, 558], [1, 489], [1, 528], [1, 615], [1, 594], [0, 648], [0, 585], [1, 660],
  [0, 669], [1, 663], [1, 666], [1, 576], [0, 630], [0, 693], [0, 660], [1, 684],
  [1, 681], [1, 624], [1, 360], [1, 480], [0, 591], [1, 576], [0, 597], [1, 660],
  [1, 543], [1, 636], [1, 570], [1, 531], [0, 606], [1, 600], [1, 639], [1, 618],
  [1, 618], [0, 609], [0, 645], [0, 597], [1, 612], [0, 249], [0, 516], [1, 504],
  [1, 522], [0, 534], [0, 630], [1, 498], [1, 537], [1, 654], [1, 558], [1, 570]
]

// [x, y] read off the volume pane
const volRed = [[32, 350], [60, 372], [85, 450], [113, 500], [140, 548], [168, 548], [195, 597], [222, 578], [250, 565], [277, 542], [305, 540], [332, 533], [360, 555], [387, 575], [414, 590], [442, 620], [470, 633], [497, 645], [525, 648], [552, 648], [580, 635], [607, 645], [634, 645], [662, 648], [690, 665], [716, 670], [744, 618], [772, 565], [800, 545], [825, 522], [850, 518], [880, 580], [907, 590], [935, 600], [962, 603], [990, 580], [1017, 582], [1045, 588], [1072, 592], [1100, 602], [1127, 618], [1155, 618], [1182, 628], [1210, 617], [1238, 600], [1265, 540], [1292, 522], [1320, 492], [1347, 478], [1372, 464], [1400, 545], [1427, 540], [1455, 560], [1482, 570], [1510, 575], [1535, 570]]
const volOrange = [[32, 365], [60, 368], [113, 382], [140, 405], [168, 455], [195, 480], [222, 518], [250, 540], [305, 545], [332, 565], [387, 573], [414, 570], [442, 582], [470, 582], [497, 600], [525, 615], [552, 628], [580, 635], [607, 640], [662, 647], [690, 658], [716, 655], [744, 620], [772, 600], [800, 598], [850, 595], [880, 590], [907, 578], [962, 563], [990, 555], [1017, 580], [1045, 590], [1072, 595], [1100, 600], [1155, 600], [1182, 608], [1210, 605], [1238, 605], [1265, 572], [1292, 565], [1320, 558], [1347, 545], [1372, 540], [1400, 540], [1427, 530], [1455, 518], [1482, 522], [1510, 518], [1535, 557]]
const volBlue = [[32, 315], [60, 345], [85, 370], [113, 392], [140, 405], [168, 420], [195, 430], [222, 435], [250, 455], [305, 455], [332, 465], [387, 475], [414, 485], [442, 520], [470, 533], [497, 560], [525, 575], [552, 582], [580, 590], [607, 600], [662, 608], [716, 617], [744, 602], [772, 603], [800, 605], [850, 612], [880, 615], [962, 612], [990, 602], [1017, 598], [1072, 597], [1100, 600], [1182, 592], [1210, 586], [1238, 583], [1265, 568], [1292, 575], [1347, 570], [1400, 573], [1427, 565], [1455, 562], [1482, 566], [1535, 566]]

function polyline(points, color, width) {
  const d = points.map(p => p[0].toFixed(1) + ',' + p[1].toFixed(1)).join(' ')
  return `<polyline points="${d}" fill="none" stroke="${color}" stroke-width="${width}" stroke-linejoin="round" stroke-linecap="round"/>`
}

function drawCandles() {
  document.getElementById('candles').innerHTML = candles.map((c, i) => {
    const x = candleX(i)
    const color = c[0] ? RED : GREEN
    const top = priceY(c[2])
    const h = Math.max(priceY(c[3]) - top, 3)
    return `<rect x="${x - 1.5}" y="${priceY(c[1])}" width="3" height="${priceY(c[4]) - priceY(c[1])}" fill="${color}"/>` +
      `<rect x="${x - 8.5}" y="${top}" width="17" height="${h}" fill="${color}"/>`
  }).join('')
}

function drawMarkers() {
  document.getElementById('markers').innerHTML = markers.map(m => {
    const [x, y, letter, tipUp] = m
    const fill = letter === 'B' ? '#ef9350' : '#6fa3ee'
    const stroke = letter === 'B' ? '#e98a42' : '#4f87e2'
    const textColor = letter === 'B' ? '#fff3d8' : '#f2f8ff'
    const bodyY = tipUp ? y + 6 : y
    const tip = tipUp
      ? `${x - 7},${y + 7} ${x},${y} ${x + 7},${y + 7}`
      : `${x - 7},${y + 39} ${x},${y + 46} ${x + 7},${y + 39}`
    return `<polygon points="${tip}" fill="${stroke}"/>` +
      `<rect x="${x - 14}" y="${bodyY}" width="28" height="40" rx="6" fill="${fill}" stroke="${stroke}" stroke-width="1.500"/>` +
      `<text x="${x}" y="${bodyY + 32}" class="marker-letter" fill="${textColor}">${letter}</text>`
  }).join('')
}

function drawMaLines() {
  const toPoints = list => list.map((v, i) => [candleX(i), priceY(v)])
  document.getElementById('maLines').innerHTML =
    polyline(toPoints(maBlue), BLUE, 3) +
    polyline(toPoints(maOrange), ORANGE, 3) +
    polyline(toPoints(maRed), MA_RED, 3)
}

function drawVolume() {
  const base = volY(800)
  const bars = volumes.map((v, i) => {
    const x = 25.5 + 22 * i - 8.5
    return `<rect x="${x}" y="${volY(v[1])}" width="17" height="${base - volY(v[1])}" fill="${v[0] ? RED : GREEN}"/>`
  })
  // today's estimated volume sits dashed above the last bar
  bars.push(`<rect x="1227" y="${volY(347)}" width="15" height="${volY(570) - volY(347)}" fill="#f6b39d" stroke="${RED}" stroke-width="1.500" stroke-dasharray="4 3"/>`)
  document.getElementById('volBars').innerHTML = bars.join('')

  const toPoints = list => list.map(p => [p[0] / 1.244, volY(p[1])])
  document.getElementById('volLines').innerHTML =
    polyline(toPoints(volRed), MA_RED, 2.5) +
    polyline(toPoints(volOrange), ORANGE, 3) +
    polyline(toPoints(volBlue), BLUE, 3.5)
}

drawCandles()
drawMarkers()
drawMaLines()
drawVolume()
```
